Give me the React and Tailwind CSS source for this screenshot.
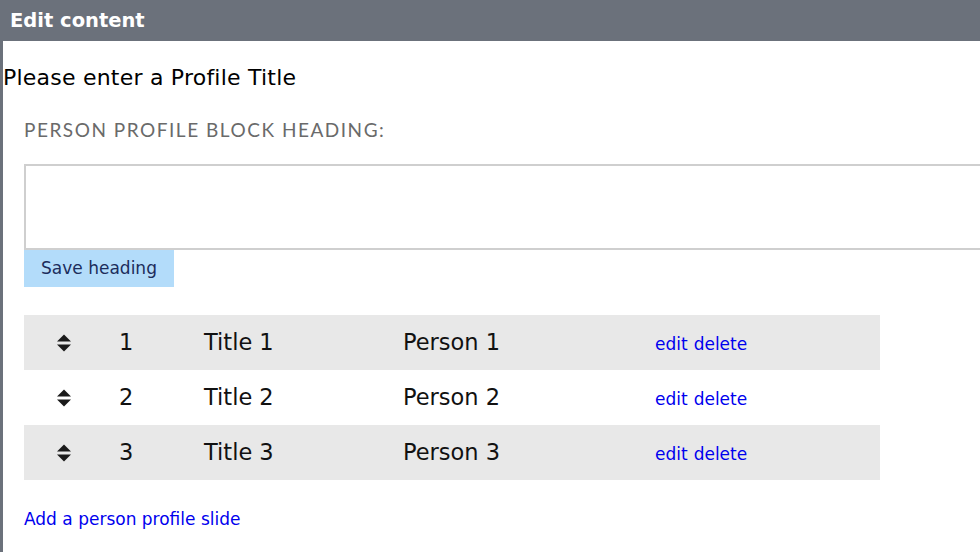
import React from "react";

function SortIcon() {
  return (
    <svg width="16" height="20" viewBox="0 0 16 20" className="block">
      <path d="M8 1.5 L15 8.5 H1 Z" fill="#1a1a1a" />
      <path d="M8 18.5 L15 11.5 H1 Z" fill="#1a1a1a" />
    </svg>
  );
}

const rows = [
  { n: 1, t: "Title 1", p: "Person 1" },
  { n: 2, t: "Title 2", p: "Person 2" },
  { n: 3, t: "Title 3", p: "Person 3" },
];

export default function App() {
  return (
    <div className="w-[980px] h-[552px] overflow-hidden bg-white border-l-[3px] border-[#6b717b] font-['DejaVu_Sans',Verdana,sans-serif]">
      <div className="h-[41px] -ml-[3px] bg-[#6b717b] flex items-center pl-[10px]">
        <span className="text-white font-bold text-[19.5px]">Edit content</span>
      </div>
      <div className="pt-[22px] text-[22px] tracking-[0.01em] text-black leading-[30px]">Please enter a Profile Title</div>
      <div className="pl-[21px]">
        <div className="mt-[25px] font-['Lato',sans-serif] text-[19px] tracking-[0.08em] text-[#6a6a6a] leading-[24px]">
          PERSON PROFILE BLOCK HEADING:
        </div>
        <div className="mt-[22px] h-[86px] border-2 border-r-0 border-[#cfcfcf] w-[980px]"></div>
        <button className="h-[37px] w-[150px] bg-[#b3dcfa] text-[#1c2d5c] text-[17px] flex items-center justify-center">
          Save heading
        </button>
        <div className="mt-[28px] w-[856px]">
          {rows.map((r, i) => (
            <div
              key={r.n}
              className={`h-[55px] flex items-center ${i % 2 === 0 ? "bg-[#e8e8e8]" : "bg-white"}`}
            >
              <div className="w-[81px] pl-[32px]">
                <SortIcon />
              </div>
              <div className="w-[99px] pl-[14px] text-[22.5px] text-[#111]">{r.n}</div>
              <div className="w-[199px] text-[22.5px] text-[#111]">{r.t}</div>
              <div className="w-[252px] text-[22.5px] text-[#111]">{r.p}</div>
              <div className="text-[17px] text-[#0000ee] flex gap-[6px] pt-[5px]">
                <a>edit</a>
                <a>delete</a>
              </div>
            </div>
          ))}
        </div>
        <div className="mt-[27px] text-[17px] text-[#0000ee]">Add a person profile slide</div>
      </div>
    </div>
  );
}
